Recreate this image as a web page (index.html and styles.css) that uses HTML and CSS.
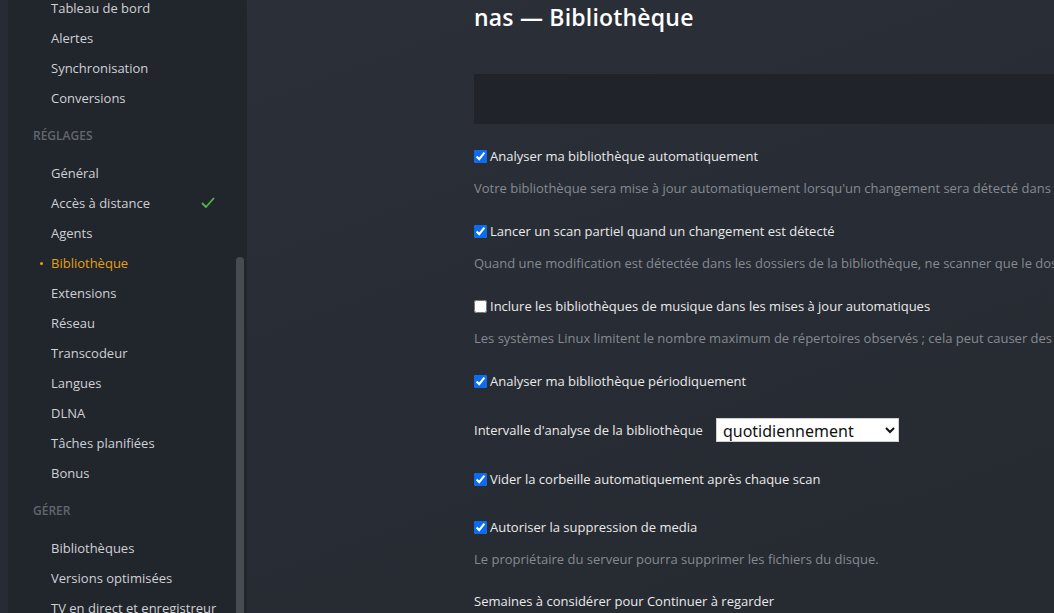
FILE: index.html
```html
<!DOCTYPE html>
<html lang="fr">
<head>
<meta charset="utf-8">
<title>nas — Bibliothèque</title>
<link rel="stylesheet" href="styles.css">
</head>
<body>
<div class="app">
  <div class="edge"></div>
  <aside class="sidebar">
    <nav class="nav">
      <a class="item">Tableau de bord</a>
      <a class="item">Alertes</a>
      <a class="item">Synchronisation</a>
      <a class="item">Conversions</a>
      <div class="header">RÉGLAGES</div>
      <a class="item">Général</a>
      <a class="item">Accès à distance<svg class="ok" width="14" height="12" viewBox="0 0 14 12"><path d="M1.5 6.5 L5 10 L12.5 1.5" fill="none" stroke="#52b54b" stroke-width="1.8" stroke-linecap="round" stroke-linejoin="round"/></svg></a>
      <a class="item">Agents</a>
      <a class="item active">Bibliothèque</a>
      <a class="item">Extensions</a>
      <a class="item">Réseau</a>
      <a class="item">Transcodeur</a>
      <a class="item">Langues</a>
      <a class="item">DLNA</a>
      <a class="item">Tâches planifiées</a>
      <a class="item">Bonus</a>
      <div class="header">GÉRER</div>
      <a class="item">Bibliothèques</a>
      <a class="item">Versions optimisées</a>
      <a class="item">TV en direct et enregistreur</a>
    </nav>
    <div class="scrollbar"></div>
  </aside>
  <main class="main">
    <div class="content">
      <h1 class="title">nas — Bibliothèque</h1>
      <div class="banner"></div>

      <div class="group">
        <label class="check"><input type="checkbox" checked>Analyser ma bibliothèque automatiquement</label>
        <p class="desc">Votre bibliothèque sera mise à jour automatiquement lorsqu'un changement sera détecté dans les dossiers de votre bibliothèque.</p>
      </div>
      <div class="group">
        <label class="check"><input type="checkbox" checked>Lancer un scan partiel quand un changement est détecté</label>
        <p class="desc">Quand une modification est détectée dans les dossiers de la bibliothèque, ne scanner que le dossier qui a été modifié.</p>
      </div>
      <div class="group">
        <label class="check"><input type="checkbox">Inclure les bibliothèques de musique dans les mises à jour automatiques</label>
        <p class="desc">Les systèmes Linux limitent le nombre maximum de répertoires observés ; cela peut causer des problèmes avec de grandes bibliothèques.</p>
      </div>
      <div class="group loose">
        <label class="check"><input type="checkbox" checked>Analyser ma bibliothèque périodiquement</label>
      </div>
      <div class="group field">
        <span class="field-label">Intervalle d'analyse de la bibliothèque</span>
        <select class="select">
          <option>quotidiennement</option>
        </select>
      </div>
      <div class="group wide">
        <label class="check"><input type="checkbox" checked>Vider la corbeille automatiquement après chaque scan</label>
      </div>
      <div class="group tight">
        <label class="check"><input type="checkbox" checked>Autoriser la suppression de media</label>
        <p class="desc">Le propriétaire du serveur pourra supprimer les fichiers du disque.</p>
      </div>
      <div class="group">
        <span class="field-label">Semaines à considérer pour Continuer à regarder</span>
      </div>
    </div>
  </main>
</div>
</body>
</html>
```

FILE: styles.css
```css
* { box-sizing: border-box; }
html, body {
  margin: 0;
  height: 100%;
  overflow: hidden;
}
body {
  font-family: "Open Sans", "Noto Sans", sans-serif;
  background: #282d35;
  color: #eaeaea;
}
.app {
  display: flex;
  height: 613px;
  overflow: hidden;
  background: linear-gradient(160deg, #2b3039 0%, #282d35 50%, #262a31 100%);
}
.edge {
  width: 8px;
  flex: none;
  background: #272b33;
}
.sidebar {
  position: relative;
  width: 239px;
  flex: none;
  background: #21252c;
  overflow: hidden;
}
.nav {
  display: flex;
  flex-direction: column;
  margin-top: -7px;
}
.item {
  display: flex;
  align-items: center;
  height: 30px;
  padding-left: 43px;
  padding-right: 32px;
  font-size: 13px;
  color: #cfd1d4;
  white-space: nowrap;
  position: relative;
}
.item .ok {
  margin-left: auto;
}
.item.active {
  color: #e5a00d;
}
.item.active::before {
  content: "";
  position: absolute;
  left: 32px;
  top: 14px;
  width: 3px;
  height: 3px;
  border-radius: 50%;
  background: #e5a00d;
}
.header {
  height: 45px;
  line-height: 45px;
  padding-left: 25px;
  font-size: 12px;
  font-weight: 600;
  color: #62676e;
}
.scrollbar {
  position: absolute;
  left: 228px;
  top: 257px;
  width: 8px;
  height: 400px;
  border-radius: 4px;
  background: #474c53;
}
.main {
  flex: 1;
  overflow: hidden;
  min-width: 0;
}
.content {
  padding-left: 227px;
  width: 1200px;
}
.title {
  margin: 2px 0 0;
  height: 30px;
  line-height: 30px;
  font-size: 23px;
  font-weight: 600;
  letter-spacing: 0.2px;
  color: #ffffff;
}
.banner {
  margin-top: 42px;
  height: 50px;
  background: #20242a;
  margin-bottom: 22px;
}
.group {
  margin-bottom: 23px;
}
.group.loose {
  margin-bottom: 24px;
}
.group.field {
  margin-bottom: 24px;
}
.group.wide {
  margin-bottom: 28px;
}
.group.tight {
  margin-bottom: 20px;
}
.check {
  display: flex;
  align-items: center;
  height: 20px;
  font-size: 13px;
  color: #eaeaea;
  white-space: nowrap;
}
.check input {
  width: 13px;
  height: 13px;
  margin: 0 3px 0 0;
  accent-color: #0b6cf0;
}
.desc {
  margin: 12px 0 0;
  line-height: 20px;
  font-size: 13px;
  color: #858a91;
  white-space: nowrap;
}
.field {
  display: flex;
  align-items: center;
  height: 30px;
}
.field-label {
  font-size: 13px;
  color: #eaeaea;
  line-height: 20px;
  white-space: nowrap;
}
.select {
  margin-left: 13px;
  width: 183px;
  height: 24px;
  font-family: "Noto Sans", "Open Sans", sans-serif;
  font-size: 16px;
  color: #111;
  background: #ffffff;
  border: 1px solid #d0d0d0;
  border-radius: 0;
  padding: 0 2px;
}
```
